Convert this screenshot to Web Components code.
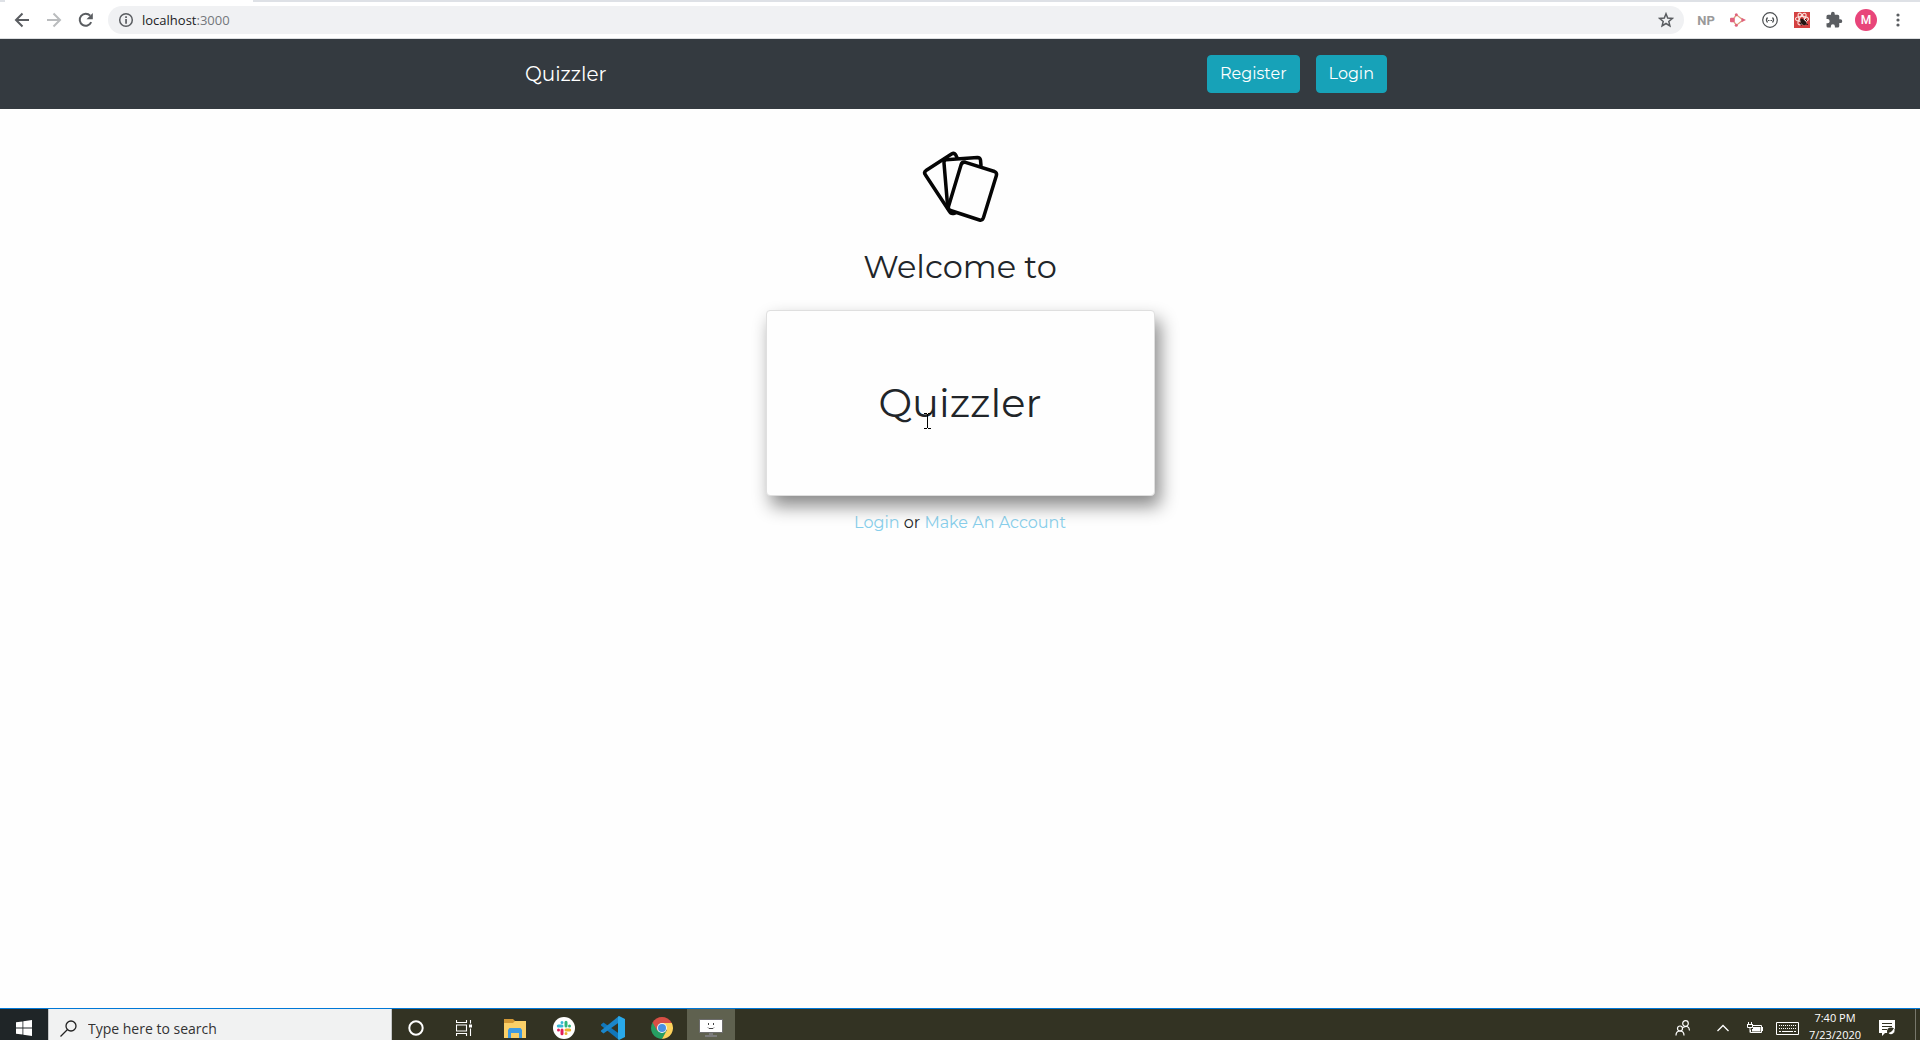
<!DOCTYPE html>
<html lang="en">
<head>
<meta charset="utf-8">
<title>Quizzler</title>
<style>
  html, body { margin: 0; height: 100%; }
  body { background: #fefefe; overflow: hidden; font-family: Montserrat, Lato, sans-serif; color: #212529; }
</style>
</head>
<body>
<desktop-screen>
  <browser-toolbar slot="top" host="localhost" port=":3000"></browser-toolbar>
  <quiz-navbar>
    Quizzler
    <quiz-button slot="actions">Register</quiz-button>
    <quiz-button slot="actions">Login</quiz-button>
  </quiz-navbar>
  <quiz-welcome>
    <flash-card>Quizzler</flash-card>
  </quiz-welcome>
  <task-bar slot="bottom"></task-bar>
</desktop-screen>

<script>
const define = (name, html, setup) => {
  const template = document.createElement('template');
  template.innerHTML = html;
  customElements.define(name, class extends HTMLElement {
    connectedCallback() {
      if (this.shadowRoot) return;
      const root = this.attachShadow({ mode: 'open' });
      root.append(template.content.cloneNode(true));
      if (setup) setup(this, root);
    }
  });
};

define('desktop-screen', `
  <style>
    :host { display: flex; flex-direction: column; height: 100vh; }
    main { flex: 1; min-height: 0; overflow: hidden; }
  </style>
  <slot name="top"></slot>
  <main><slot></slot></main>
  <slot name="bottom"></slot>`);

define('browser-toolbar', `
  <style>
    :host { display: block; background: #fff; border-bottom: 1px solid #dcdee0; font-family: "Open Sans", "Noto Sans", sans-serif; }
    .tabs { height: 2px; background: #dee1e6; padding-left: 5px; }
    .tab { width: 248px; height: 2px; background: #fff; }
    .bar { display: flex; align-items: center; height: 36px; padding: 0 6px; }
    button { display: flex; align-items: center; justify-content: center; width: 32px; height: 28px; padding: 0; border: 0; background: none; font: inherit; }
    svg { display: block; }
    .address { flex: 1; display: flex; align-items: center; height: 28px; margin: 0 6px; border-radius: 14px; background: #f0f1f3; padding: 0 2px; }
    .url { flex: 1; font-size: 13px; line-height: 20px; color: #202124; }
    .port { color: #73777b; }
    .np { font: bold 13px Roboto, sans-serif; color: #9a9a9a; }
    .avatar { display: flex; align-items: center; justify-content: center; width: 22px; height: 22px; border-radius: 50%; background: #e8457a; color: #fff; font: 500 12px Roboto, sans-serif; }
  </style>
  <div class="tabs"><div class="tab"></div></div>
  <div class="bar">
    <button aria-label="Back"><svg width="16" height="16" viewBox="0 0 16 16" fill="none" stroke="#5a5d61" stroke-width="2"><path d="M15 8H2.500M8.500 1.500 2 8l6.500 6.500"/></svg></button>
    <button aria-label="Forward"><svg width="16" height="16" viewBox="0 0 16 16" fill="none" stroke="#babcbe" stroke-width="2"><path d="M1 8h12.500M7.500 1.500 14 8l-6.500 6.500"/></svg></button>
    <button aria-label="Reload"><svg width="16" height="16" viewBox="0 0 16 16"><path d="M13.200 10.200A6 6 0 1 1 12.200 3.700" fill="none" stroke="#5a5d61" stroke-width="2"/><path d="M14.800 1v6.300H8.500z" fill="#5a5d61"/></svg></button>
    <div class="address">
      <button aria-label="Site information"><svg width="16" height="16" viewBox="0 0 16 16"><circle cx="8" cy="8" r="6.300" fill="none" stroke="#5a5d61" stroke-width="1.500"/><path d="M7.200 4.200h1.700v1.700H7.200zM7.200 7h1.700v4.800H7.200z" fill="#5a5d61"/></svg></button>
      <span class="url"><span class="host"></span><span class="port"></span></span>
      <button aria-label="Bookmark"><svg width="16" height="16" viewBox="0 0 16 16" fill="none" stroke="#5a5d61" stroke-width="1.500" stroke-linejoin="miter"><path d="M8 1.800 9.700 6.100l4.600.3-3.500 3 1.100 4.500L8 11.500l-3.900 2.400 1.100-4.500-3.500-3 4.600-.3z"/></svg></button>
    </div>
    <button class="np">NP</button>
    <button aria-label="Diagram"><svg width="16" height="14" viewBox="0 0 16 14"><path d="M4 5 6.500 1.800 13 7l-6.500 5.200L4 9" fill="none" stroke="#dda27e" stroke-width="1.300"/><rect x="0" y="4.700" width="4.800" height="4.600" rx="1" fill="#e0627d"/><circle cx="6.300" cy="1.800" r="1.500" fill="#e0627d"/><circle cx="6.300" cy="12.200" r="1.500" fill="#e0627d"/><path d="M11.500 4.700 16 7l-4.500 2.300z" fill="#e0627d"/></svg></button>
    <button aria-label="JSON"><svg width="16" height="16" viewBox="0 0 16 16" fill="none" stroke="#4c4f52" stroke-width="1.200"><circle cx="8" cy="8" r="7.300"/><path d="M5.500 5.500Q3.300 8 5.500 10.500M10.500 5.500Q12.700 8 10.500 10.500"/><path d="M6 8.500h4" stroke-width="1" stroke-dasharray="1 .5"/></svg></button>
    <button aria-label="React tools"><svg width="16" height="16" viewBox="0 0 16 16"><path d="M0 0h16v16H0z" fill="#d44141"/><g fill="none" stroke="#fbe5e0" stroke-width="1.100"><ellipse cx="8" cy="7" rx="6.500" ry="2.500"/><ellipse cx="8" cy="7" rx="6.500" ry="2.500" transform="rotate(60 8 7)"/><ellipse cx="8" cy="7" rx="6.500" ry="2.500" transform="rotate(120 8 7)"/></g><ellipse cx="9.500" cy="10.500" rx="3.300" ry="2.300" transform="rotate(40 9.500 10.500)" fill="#231714"/><circle cx="7.800" cy="8" r="1.600" fill="#231714"/><path d="m11 7 2 2M6 10.500l1.500 3M12 12l2 .5" stroke="#231714"/></svg></button>
    <button aria-label="Extensions"><svg width="18" height="18" viewBox="0 0 24 24" fill="#5a5d61"><path d="M20.500 11H19V7a2 2 0 0 0-2-2h-4V3.500a2.500 2.500 0 0 0-5 0V5H4a2 2 0 0 0-2 2v3.800h1.500a2.700 2.700 0 0 1 0 5.400H2V20a2 2 0 0 0 2 2h3.800v-1.500a2.700 2.700 0 0 1 5.400 0V22H17a2 2 0 0 0 2-2v-4h1.500a2.500 2.500 0 0 0 0-5z"/></svg></button>
    <button aria-label="Profile"><span class="avatar">M</span></button>
    <button aria-label="Menu"><svg width="4" height="14" viewBox="0 0 4 14" fill="#5a5d61"><circle cx="2" cy="2" r="1.600"/><circle cx="2" cy="7" r="1.600"/><circle cx="2" cy="12" r="1.600"/></svg></button>
  </div>`, (el, root) => {
  root.querySelector('.host').textContent = el.getAttribute('host');
  root.querySelector('.port').textContent = el.getAttribute('port');
});

define('quiz-navbar', `
  <style>
    :host { display: block; background: #343a40; }
    nav { display: flex; align-items: center; max-width: 870px; margin: 0 auto; padding: 16px 0; }
    a { color: #fff; font-size: 20px; line-height: 30px; text-decoration: none; }
    .actions { display: flex; gap: 16px; margin-left: auto; margin-right: 8px; }
  </style>
  <nav><a href="#"><slot></slot></a><div class="actions"><slot name="actions"></slot></div></nav>`);

define('quiz-button', `
  <style>
    :host { display: block; }
    button { display: block; padding: 6px 12px; border: 1px solid #17a2b8; border-radius: 4px; background: #17a2b8; color: #fff; font: inherit; font-size: 16px; line-height: 24px; }
  </style>
  <button><slot></slot></button>`);

define('flash-card', `
  <style>
    :host { display: flex; align-items: center; justify-content: center; box-sizing: border-box; position: relative; width: 389px; max-width: 90%; min-height: 186px; background: #fefefe; border: 1px solid #dfdfdf; border-radius: 4px; box-shadow: 5px 10px 18px #888; }
    h1 { margin: 0; font-size: 40px; font-weight: 400; line-height: 48px; }
    .cursor { position: absolute; left: 157px; top: 102px; }
  </style>
  <h1><slot></slot></h1>
  <svg class="cursor" width="7" height="16" viewBox="0 0 7 16" fill="none" stroke="#000" shape-rendering="crispEdges"><path d="M0 .5h3M4 .5h3M3.500 1v14M0 15.500h3M4 15.500h3"/></svg>`);

define('quiz-welcome', `
  <style>
    :host { display: flex; flex-direction: column; align-items: center; padding-top: 38px; }
    svg { display: block; }
    h2 { margin: 21px 0 24px; font-size: 32px; font-weight: 400; line-height: 38px; }
    p { margin: 15px 0 0; font-size: 16px; line-height: 24px; }
    a { color: #87ceeb; text-decoration: none; }
  </style>
  <svg width="80" height="80" viewBox="0 0 80 80" fill="none" stroke="#050505" stroke-width="3.500" stroke-linejoin="round" stroke-linecap="round">
    <path d="M37 10.500 35.500 7.500Q34 5.500 31.500 7L6 23.500Q3.500 25.500 5.500 28L29.500 64.500Q31 67.500 35 66"/>
    <path d="M61 18.500 60.500 13Q60 10.500 57.500 10.500L26 12.700Q23.700 13 24 16L27.700 60"/>
    <path d="M45.500 15.300 74.500 24.500Q77.200 25.700 76.400 28.500L63.500 70.500Q62.300 73.800 59.500 73L30.500 63.500Q27.500 62.300 28.500 59.500L41 18Q42 14.500 45.500 15.300Z" fill="#fefefe"/>
  </svg>
  <h2>Welcome to</h2>
  <slot></slot>
  <p><a href="#login">Login</a> or <a href="#register">Make An Account</a></p>`);

define('task-bar', `
  <style>
    :host { display: block; flex: none; height: 32px; overflow: hidden; background: #333323; color: #fff; font-family: "Open Sans", "Noto Sans", sans-serif; }
    .strip { display: flex; height: 39px; border-top: 1px solid #0078d7; }
    button { display: flex; align-items: center; justify-content: center; box-sizing: border-box; width: 48px; height: 38px; padding: 0; border: 0; background: none; color: inherit; font: inherit; }
    svg { display: block; }
    .start { background: #1f2527; }
    label { display: flex; align-items: center; box-sizing: border-box; width: 344px; background: #f1f2f2; border: solid #c4c6c6; border-width: 0 1px; }
    label svg { margin: 0 11px; }
    input { flex: 1; min-width: 0; border: 0; padding: 0; background: none; font: inherit; font-size: 14px; line-height: 20px; }
    input::placeholder { color: #333; opacity: 1; }
    .system, .apps, .tray { display: flex; }
    .apps { gap: 1px; margin-left: 3px; }
    .active { background: #5f614f; }
    .tray { margin-left: auto; }
    .tray button { width: 32px; }
    .tray .people { width: 48px; }
    .tray .clock { width: 64px; padding-bottom: 4px; font-size: 11px; line-height: 17px; flex-direction: column; }
    .tray .notes { width: 40px; margin-right: 8px; }
    .peek { width: 4px; border-left: 1px solid #77776b; }
  </style>
  <div class="strip">
    <button class="start" aria-label="Start"><svg width="16" height="16" viewBox="0 0 16 16" fill="#fff"><path d="M0 2.300 6.500 1.400v6.200H0zM7.300 1.200 16 0v7.600H7.300zM0 8.400h6.500v6.200L0 13.700zM7.300 8.400H16V16l-8.700-1.200z"/></svg></button>
    <label>
      <svg width="17" height="17" viewBox="0 0 17 17" fill="none" stroke="#222" stroke-width="1.300"><circle cx="11" cy="6" r="5"/><path d="m7.500 9.500-7 7"/></svg>
      <input type="text" placeholder="Type here to search" aria-label="Type here to search">
    </label>
    <div class="system">
      <button aria-label="Cortana"><svg width="16" height="16" viewBox="0 0 16 16" fill="none" stroke="#fff" stroke-width="2"><circle cx="8" cy="8" r="6.700"/></svg></button>
      <button aria-label="Task view"><svg width="16" height="16" viewBox="0 0 16 16" fill="none" stroke="#fff" stroke-width="1.100"><path d="M.5 0v2.500h10V0M.5 16v-2.500h10V16M.5 5h10v6H.5zM14.500 0v3.500M14.500 8.500V16"/><path d="M13 4.500h3v3h-3z" fill="#fff" stroke="none"/></svg></button>
    </div>
    <div class="apps">
      <button aria-label="File Explorer"><svg width="22" height="19" viewBox="0 0 22 19"><path d="M0 0h9l2 2v4H0z" fill="#d39835"/><path d="M0 4h9l2-2h11v17H0z" fill="#fbd068"/><path d="M4 19v-8l1.500-2h11l1.500 2v8h-3v-5H7v5z" fill="#3f9be2"/></svg></button>
      <button aria-label="Slack"><svg width="22" height="22" viewBox="0 0 22 22" stroke-width="3" stroke-linecap="round"><circle cx="11" cy="11" r="11" fill="#fff"/><path d="M9 5.500v.01M5.300 9H9" stroke="#36b9d6"/><path d="M13 5.300V9M16.500 9v.01" stroke="#2eb67d"/><path d="M13 13h3.700M13 16.500v.01" stroke="#ecb22e"/><path d="M9 13v3.700M5.500 13v.01" stroke="#e01e5a"/></svg></button>
      <button aria-label="Visual Studio Code"><svg width="24" height="24" viewBox="0 0 24 24"><path d="M0 8.500 2.500 6.500 20 19l-2 5L0 9.500z" fill="#1177bb"/><path d="M0 15.500 2.500 17.500 20 5l-2-5L0 14.500z" fill="#1b86ca"/><path d="M18 0 24 3v18l-6 3-1-1V1z" fill="#29a9ea"/></svg></button>
      <button aria-label="Chrome"><svg width="22" height="22" viewBox="0 0 22 22"><path d="M11 11 1.500 5.500a11 11 0 0 1 19 0z" fill="#d94f45"/><path d="M11 11 1.500 5.500A11 11 0 0 0 11 22l5-8z" fill="#269e62"/><path d="M11 6h9.800A11 11 0 0 1 11 22l5-9z" fill="#fdd25c"/><path d="M1.500 5.500 6.500 14 11 6h9.800l-.3-.5z" fill="#d94f45"/><circle cx="11" cy="11" r="5" fill="#f5f5f5"/><circle cx="11" cy="11" r="4" fill="#4a90e2"/></svg></button>
      <button class="active" aria-label="Screen recorder"><svg width="24" height="18" viewBox="0 0 24 18"><path d="M0 0h24v14H0z" fill="#6d6d6d"/><path d="M1 1h22v12H1z" fill="#fff"/><path d="M10 14h4v2h4v2H6v-2h4z" fill="#7b7b7b"/><path d="M9.500 4v2M14.500 4v2M9 8.500l1 1h4l1-1" fill="none" stroke="#444"/></svg></button>
    </div>
    <div class="tray">
      <button class="people" aria-label="People"><svg width="16" height="16" viewBox="0 0 16 16" fill="none" stroke="#fff" stroke-width="1.200"><circle cx="10.500" cy="3.500" r="2.800"/><circle cx="5" cy="8.500" r="2.500"/><path d="M1 15.500q0-4.500 4-4.500t4 4.500M8 7.500q6-3 6.500 3"/></svg></button>
      <button aria-label="Show hidden icons"><svg width="12" height="8" viewBox="0 0 12 8" fill="none" stroke="#fff" stroke-width="1.300"><path d="m.5 7 5.500-5.500L11.500 7"/></svg></button>
      <button aria-label="Battery"><svg width="16" height="12" viewBox="0 0 16 12" fill="none" stroke="#fff"><path d="M5 3.500h9.500v7H3.500V8M1.500 0v2.500M4.500 0v2.500M0 2.500h6M.5 3v2.500h5V3M3 6v4.500"/><path d="M6 5h7.500v4.500H5V7h1z" fill="#fff" stroke="none"/><path d="M15.500 5v4"/></svg></button>
      <button aria-label="Touch keyboard"><svg width="23" height="13" viewBox="0 0 23 13" fill="none" stroke="#fff"><path d="M.5.500h22v12H.5z"/><path d="M3 3.500h17M3 6.500h17" stroke-dasharray="1 1"/><path d="M3 9.500h2M6 9.500h11M18 9.500h2"/></svg></button>
      <button class="clock"><span>7:40 PM</span><span>7/23/2020</span></button>
      <button class="notes" aria-label="Notifications"><svg width="16" height="16" viewBox="0 0 16 16"><path d="M0 0h16v13H6l-3 3v-3H0z" fill="#fff"/><path d="M3 3.500h10M3 6.500h10M3 9.500h5" stroke="#333323" fill="none"/><circle cx="12" cy="11.500" r="4" fill="#333323"/><path d="M9.500 13a3.300 3.300 0 0 0 5-4.500q-1 3-5 4.500z" fill="#fff"/></svg></button>
      <div class="peek"></div>
    </div>
  </div>`);
</script>
</body>
</html>
